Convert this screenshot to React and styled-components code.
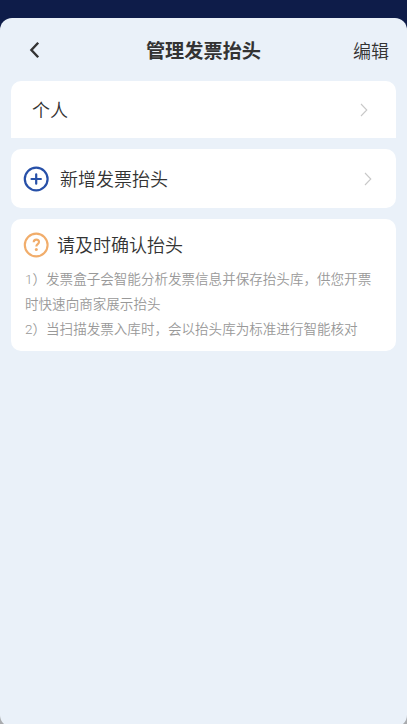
import React from 'react';
import styled, { createGlobalStyle } from 'styled-components';

const GlobalStyle = createGlobalStyle`
  * {
    box-sizing: border-box;
  }

  body {
    margin: 0;
    font-family: Roboto, 'Noto Sans CJK SC', sans-serif;
    font-weight: 350;
    color: #333;
  }
`;

const Screen = styled.div`
  height: 724px;
  padding-top: 18px;
  overflow: hidden;
  background: linear-gradient(#0e1c49 0, #0e1c49 60px, #a9abae 60px);
`;

const Sheet = styled.main`
  height: 709px;
  padding: 0 11px;
  border-radius: 12px;
  background-color: #eaf1f9;
`;

const Header = styled.header`
  display: grid;
  grid-template-columns: 60px 1fr 60px;
  align-items: center;
  height: 63px;
  padding: 0 7px 0 18px;
`;

const BackButton = styled.button`
  display: flex;
  padding: 0;
  border: none;
  background: none;
  color: #333;
`;

const Title = styled.h1`
  margin: 0;
  padding: 5px 11px 0 0;
  font-size: 19.2px;
  font-weight: 700;
  line-height: 28px;
  text-align: center;
  white-space: nowrap;
`;

const EditButton = styled.button`
  padding: 4px 0 0;
  border: none;
  background: none;
  color: #333;
  font-family: inherit;
  font-size: 18px;
  font-weight: inherit;
  line-height: 28px;
  text-align: right;
`;

const Row = styled.div`
  display: flex;
  align-items: center;
  height: ${({ $height }) => $height};
  padding: ${({ $padding }) => $padding};
  margin-bottom: 11px;
  border-radius: ${({ $radius }) => $radius || '10px'};
  background-color: #fff;
`;

const RowLabel = styled.span`
  flex: 1;
  padding-top: 3px;
  font-size: 18px;
  line-height: 26px;
`;

const RowIcon = styled.svg`
  flex-shrink: 0;
  margin-right: ${({ $gap }) => $gap};
`;

const NoticeCard = styled.section`
  height: 132px;
  padding: 12px 13px 0 12px;
  border-radius: 10px;
  background-color: #fff;
`;

const NoticeHeader = styled.div`
  display: flex;
  align-items: center;
  height: 27px;
  margin-bottom: 9px;
`;

const NoticeText = styled.p`
  margin: 0;
  padding-left: 2px;
  color: #999;
  font-size: 13.56px;
  line-height: 25px;
`;

const Chevron = () => (
  <svg width="8" height="14" viewBox="0 0 8 14" fill="none" stroke="#c8c8c8" strokeWidth="1.1">
    <path d="M1 1l5.8 6L1 13" />
  </svg>
);

const App = () => {
  return (
    <>
      <GlobalStyle />
      <Screen>
        <Sheet>
          <Header>
            <BackButton aria-label="返回">
              <svg width="11" height="18" viewBox="0 0 11 18" fill="none" stroke="#333" strokeWidth="2.4">
                <path d="M9.2 1.7L2.4 9l6.8 7.3" />
              </svg>
            </BackButton>
            <Title>管理发票抬头</Title>
            <EditButton>编辑</EditButton>
          </Header>

          <Row $height="57px" $padding="0 28px 0 21px" $radius="10px 10px 0 0">
            <RowLabel>个人</RowLabel>
            <Chevron />
          </Row>

          <Row $height="59px" $padding="0 24px 0 12px">
            <RowIcon $gap="11px" width="26" height="26" viewBox="0 0 26 26" fill="none" stroke="#2750a8" strokeWidth="2.2">
              <circle cx="13.2" cy="13" r="11.4" />
              <path d="M13.2 8.3v9.4M8.5 13h9.4" strokeLinecap="round" />
            </RowIcon>
            <RowLabel>新增发票抬头</RowLabel>
            <Chevron />
          </Row>

          <NoticeCard>
            <NoticeHeader>
              <RowIcon $gap="8px" width="26" height="26" viewBox="0 0 26 26" fill="none" stroke="#f1ad6b" strokeWidth="2.1">
                <circle cx="13.2" cy="13" r="11.4" />
                <path d="M10.7 10.3c0-1.7 1-2.7 2.6-2.7s2.7 1 2.7 2.5c0 2.1-2.7 2.1-2.7 4.5" />
                <circle cx="13.3" cy="17.6" r="1.5" fill="#f1ad6b" stroke="none" />
              </RowIcon>
              <RowLabel>请及时确认抬头</RowLabel>
            </NoticeHeader>
            <NoticeText>1）发票盒子会智能分析发票信息并保存抬头库，供您开票时快速向商家展示抬头</NoticeText>
            <NoticeText>2）当扫描发票入库时，会以抬头库为标准进行智能核对</NoticeText>
          </NoticeCard>
        </Sheet>
      </Screen>
    </>
  );
};

export default App;
